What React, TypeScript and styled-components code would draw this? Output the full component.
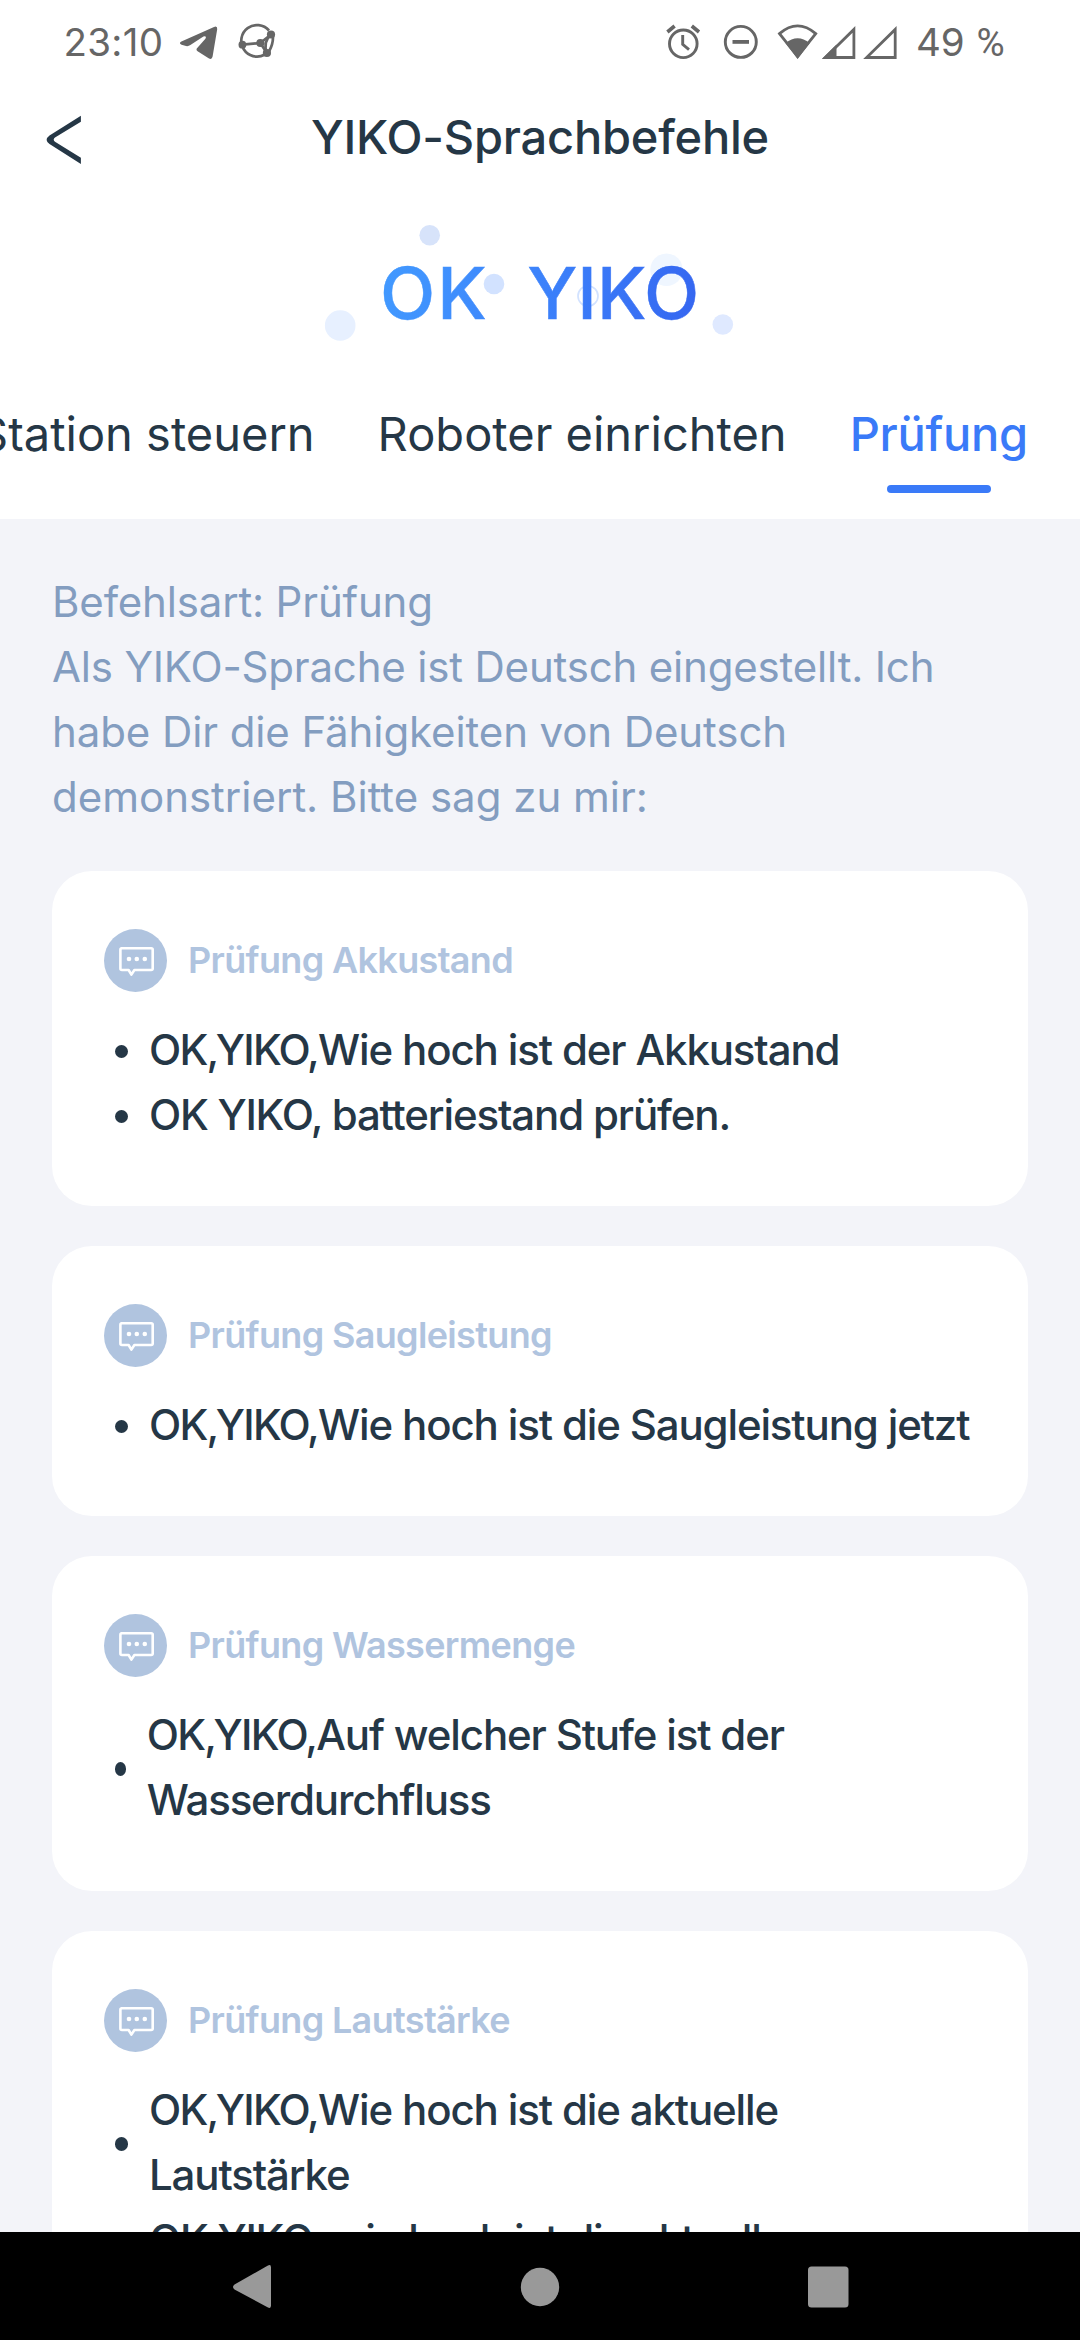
import React from "react";
import styled, { createGlobalStyle } from "styled-components";

const GlobalStyle = createGlobalStyle`
  * { box-sizing: border-box; }
  body { margin: 0; background: #ffffff; }
  ul { margin: 0; padding: 0; list-style: none; }
  h1, h2, p { margin: 0; font-weight: inherit; font-size: inherit; }
  button { border: 0; padding: 0; background: none; font: inherit; color: inherit; }
  svg { display: block; flex: none; }
`;

const Screen = styled.div`
  width: 1080px;
  height: 2340px;
  display: flex;
  flex-direction: column;
  overflow: hidden;
  background: #ffffff;
  color: #253746;
  font-family: Inter, Roboto, "Liberation Sans", sans-serif;
`;

const StatusBar = styled.div`
  flex: none;
  height: 84px;
  padding: 0 60px 0 63.5px;
  display: flex;
  justify-content: space-between;
  color: #666666;
`;

const StatusGroup = styled.div`
  display: flex;
  align-items: flex-start;
`;

const StatusText = styled.span<{ $width: number; $spacing: number }>`
  width: ${(p) => p.$width}px;
  line-height: 84px;
  font-size: 38.5px;
  letter-spacing: ${(p) => p.$spacing}px;
  white-space: nowrap;
`;

const Percent = styled.span`
  margin-left: 1px;
  font-family: Roboto, "Liberation Sans", sans-serif;
`;

const Header = styled.header`
  flex: none;
  height: 106px;
  padding: 0 40px;
  display: grid;
  grid-template-columns: 60px 1fr 60px;
  align-items: center;
`;

const Title = styled.h1`
  text-align: center;
  font-size: 47px;
  line-height: 106px;
  font-weight: 500;
  letter-spacing: -0.22px;
`;

const Hero = styled.div`
  flex: none;
  position: relative;
  height: 200px;
  padding: 60px 0 0 380px;
`;

const Bubbles = styled.svg`
  position: absolute;
  left: 0;
  top: 0;
`;

const Logo = styled.div`
  position: relative;
  width: 320px;
  display: flex;
  gap: 38.5px;
  font-size: 72px;
  line-height: 86px;
  font-weight: 500;
  color: transparent;
  background: linear-gradient(100deg, #429aff 0%, #3c83fb 48%, #3565f0 100%);
  background-clip: text;
  -webkit-background-clip: text;
  -webkit-text-stroke: 0.5px transparent;
`;

const LogoWord = styled.span<{ $spacing: number }>`
  letter-spacing: ${(p) => p.$spacing}px;
`;

const Tabs = styled.nav`
  flex: none;
  height: 129px;
  padding-right: 52px;
  display: flex;
  justify-content: flex-end;
  gap: 63px;
`;

const Tab = styled.button<{ $active?: boolean }>`
  display: flex;
  flex-direction: column;
  align-items: center;
  padding-top: 15px;
  font-size: 47px;
  line-height: 57px;
  font-weight: ${(p) => (p.$active ? 500 : 400)};
  letter-spacing: ${(p) => (p.$active ? -0.25 : 0)}px;
  color: ${(p) => (p.$active ? "#3a7af8" : "inherit")};
  white-space: nowrap;
`;

const Indicator = styled.span`
  width: 104px;
  height: 8px;
  margin-top: 23px;
  border-radius: 4px;
  background: #3a7af8;
`;

const Content = styled.main`
  flex: 1;
  min-height: 0;
  overflow: hidden;
  padding: 50px 52px 0;
  background: #f3f4f9;
`;

const Intro = styled.div`
  height: 302px;
  font-size: 42px;
  line-height: 65px;
  color: #839dc0;
  white-space: nowrap;
`;

const IntroLine = styled.p<{ $spacing: number }>`
  letter-spacing: ${(p) => p.$spacing}px;
`;

const CardList = styled.div`
  display: flex;
  flex-direction: column;
  gap: 40px;
`;

const Card = styled.section`
  padding: 58px 52px 59px;
  border-radius: 40px;
  background: #ffffff;
`;

const CardHead = styled.div`
  display: flex;
  align-items: center;
  gap: 21px;
  height: 63px;
  margin-bottom: 25px;
`;

const CardTitle = styled.h2`
  padding-bottom: 2px;
  font-size: 36px;
  line-height: 44px;
  font-weight: 600;
  letter-spacing: -0.66px;
  color: #b0c4df;
`;

const CommandItem = styled.li<{ $narrow?: boolean }>`
  display: flex;
  align-items: center;
  gap: 20.7px;
  padding-left: 11px;
  font-size: 42px;
  line-height: 65px;
  font-weight: 500;
  letter-spacing: -1.14px;
  white-space: nowrap;
  &::before {
    content: "";
    flex: none;
    width: ${(p) => (p.$narrow ? 11 : 13.3)}px;
    height: 13.3px;
    margin-top: 4px;
    border-radius: 50%;
    background: #253746;
  }
`;

const WakeWord = styled.span<{ $spacing: number }>`
  letter-spacing: ${(p) => p.$spacing}px;
`;

const NavBar = styled.footer`
  flex: none;
  height: 108px;
  display: grid;
  grid-template-columns: 252px 288px 288px 252px;
  background: #000000;
`;

const NavSlot = styled.div`
  display: flex;
  justify-content: flex-end;
`;

const ChatIcon = () => (
  <svg width="63" height="63" viewBox="0 0 63 63">
    <circle cx="31.5" cy="31.5" r="31.5" fill="#b0c4df" />
    <path
      d="M17.4 19.3H47.2q1.5 0 1.5 1.5v18.7q0 1.5-1.5 1.5H30.4L27.4 45.6L24.6 41H18q-1.6 0-1.6-1.5v-18.7q0-1.5 1.6-1.5Z"
      fill="none"
      stroke="#ffffff"
      strokeWidth="2.6"
      strokeLinejoin="round"
    />
    <g fill="#ffffff">
      <circle cx="25" cy="30" r="2.3" />
      <circle cx="32.8" cy="30" r="2.3" />
      <circle cx="40.8" cy="30" r="2.3" />
    </g>
  </svg>
);

const introLines = [
  { text: "Befehlsart: Prüfung", spacing: -0.17 },
  { text: "Als YIKO-Sprache ist Deutsch eingestellt. Ich", spacing: -0.18 },
  { text: "habe Dir die Fähigkeiten von Deutsch", spacing: -0.1 },
  { text: "demonstriert. Bitte sag zu mir:", spacing: -0.01 },
];

type Command = { wake: string; spacing: number; lines: string[] };

const cards: { title: string; narrow?: boolean; commands: Command[] }[] = [
  {
    title: "Prüfung Akkustand",
    commands: [
      { wake: "OK,YIKO,", spacing: -1.75, lines: ["Wie hoch ist der Akkustand"] },
      { wake: "OK YIKO, ", spacing: -1.28, lines: ["batteriestand prüfen."] },
    ],
  },
  {
    title: "Prüfung Saugleistung",
    commands: [{ wake: "OK,YIKO,", spacing: -1.75, lines: ["Wie hoch ist die Saugleistung jetzt"] }],
  },
  {
    title: "Prüfung Wassermenge",
    narrow: true,
    commands: [
      { wake: "OK,YIKO,", spacing: -1.7, lines: ["Auf welcher Stufe ist der", "Wasserdurchfluss"] },
    ],
  },
  {
    title: "Prüfung Lautstärke",
    commands: [
      { wake: "OK,YIKO,", spacing: -1.75, lines: ["Wie hoch ist die aktuelle", "Lautstärke"] },
      { wake: "OK YIKO, ", spacing: -1.28, lines: ["wie hoch ist die aktuelle", "Lautstärke"] },
    ],
  },
];

const CommandText = ({ command }: { command: Command }) => (
  <span>
    <WakeWord $spacing={command.spacing}>{command.wake}</WakeWord>
    {command.lines.map((line, i) => (
      <React.Fragment key={line}>
        {i > 0 && <br />}
        {line}
      </React.Fragment>
    ))}
  </span>
);

export default function App() {
  return (
    <Screen>
      <GlobalStyle />
      <StatusBar>
        <StatusGroup>
          <StatusText $width={114.5} $spacing={0.3}>23:10</StatusText>
          <svg width="100" height="84" viewBox="178 0 100 84">
            <path
              d="M181.4 41.4L214 26.9Q217.6 25.6 217.2 29.2L212.6 56.6Q211.8 60.2 208.6 58.2L197.6 51.2Q195.6 49.8 197.2 48L205.4 38.8Q207 35.4 203.4 36.4L190.4 45Q188.4 46.5 186 46L181.6 44.8Q178.4 43 181.4 41.4Z"
              fill="#666666"
            />
            <g fill="none" stroke="#666666" strokeWidth="2.7">
              <path d="M269 30.5A15.8 15.8 0 1 0 264.5 54.8" />
              <path d="M242.4 44.7L260.3 43L271 34.5M272.8 35Q273.8 43 269 51.5" />
              <path d="M260.3 43L266.9 53" />
              <path d="M271 34.5Q262.6 42 266.9 53" />
            </g>
            <g fill="#666666">
              <circle cx="242.4" cy="44.7" r="3.9" />
              <circle cx="271" cy="34.5" r="4.1" />
              <circle cx="260.3" cy="43" r="4" />
              <circle cx="266.9" cy="53" r="4.1" />
            </g>
          </svg>
        </StatusGroup>
        <StatusGroup>
          <svg width="250" height="84" viewBox="666 0 250 84">
            <g fill="none" stroke="#666666" strokeWidth="2.9">
              <circle cx="683.3" cy="43.8" r="13.8" />
              <path d="M682.7 35V44.3L689 49.6" />
              <path d="M667.4 32L674.6 26M699 32L691.8 26" strokeWidth="3.6" />
              <circle cx="740.8" cy="41.9" r="15.5" />
              <path d="M732.5 41.9H749" strokeWidth="3.8" />
              <path d="M797.6 56.5L779.5 33.6Q797.6 18.2 815.7 33.6Z" strokeWidth="2.8" />
              <path d="M853.9 29.4V57.5H825.3Z" strokeWidth="2.8" />
              <path d="M895.2 29.4V57.5H866.6Z" strokeWidth="2.8" />
            </g>
            <path d="M797.6 59L785.5 43Q797.6 33.5 809.7 43Z" fill="#666666" />
            <path d="M822 58.8L836.5 44.5V58.8Z" fill="#666666" />
          </svg>
          <StatusText $width={104} $spacing={0}>
            49 <Percent>%</Percent>
          </StatusText>
        </StatusGroup>
      </StatusBar>

      <Header>
        <svg width="60" height="106" viewBox="40 84 60 106">
          <path
            d="M80.9 115.7V121.8L55 137.6Q52.4 139.7 55 141.8L80.9 157.8V164L49.5 144Q43.8 139.7 49.5 135.4Z"
            fill="#253746"
          />
        </svg>
        <Title>YIKO-Sprachbefehle</Title>
      </Header>

      <Hero>
        <Bubbles width="1080" height="200" viewBox="0 190 1080 200">
          <circle cx="429.7" cy="235.3" r="10.3" fill="#d7e3fa" />
          <circle cx="494" cy="284" r="10.3" fill="#d2e2ff" />
          <circle cx="340.2" cy="325.5" r="15.3" fill="#e7f0ff" />
          <circle cx="666.5" cy="269.7" r="16.2" fill="#eff6ff" />
          <circle cx="722.8" cy="324.5" r="10.3" fill="#dfe9ff" />
          <circle cx="588" cy="296" r="10" fill="none" stroke="#d2e2ff" strokeWidth="1.7" />
        </Bubbles>
        <Logo>
          <LogoWord $spacing={2}>OK</LogoWord>
          <LogoWord $spacing={0}>YIKO</LogoWord>
        </Logo>
      </Hero>

      <Tabs>
        <Tab>Station steuern</Tab>
        <Tab>Roboter einrichten</Tab>
        <Tab $active>
          Prüfung
          <Indicator />
        </Tab>
      </Tabs>

      <Content>
        <Intro>
          {introLines.map((line) => (
            <IntroLine key={line.text} $spacing={line.spacing}>
              {line.text}
            </IntroLine>
          ))}
        </Intro>
        <CardList>
          {cards.map((card) => (
            <Card key={card.title}>
              <CardHead>
                <ChatIcon />
                <CardTitle>{card.title}</CardTitle>
              </CardHead>
              <ul>
                {card.commands.map((command) => (
                  <CommandItem key={command.wake} $narrow={card.narrow}>
                    <CommandText command={command} />
                  </CommandItem>
                ))}
              </ul>
            </Card>
          ))}
        </CardList>
      </Content>

      <NavBar>
        <NavSlot>
          <svg width="60" height="108" viewBox="192 2232 60 108" overflow="visible">
            <path
              d="M267.5 2265.8Q271 2263.6 271 2267.5V2305.5Q271 2309.4 267.5 2307.2L234.5 2289.4Q231.5 2287 234.5 2284.6Z"
              fill="#999999"
            />
          </svg>
        </NavSlot>
        <NavSlot>
          <svg width="60" height="108" viewBox="480 2232 60 108" overflow="visible">
            <circle cx="540" cy="2287" r="19.2" fill="#999999" />
          </svg>
        </NavSlot>
        <NavSlot>
          <svg width="60" height="108" viewBox="768 2232 60 108" overflow="visible">
            <rect x="808" y="2266.5" width="40.5" height="41" rx="3.5" fill="#999999" />
          </svg>
        </NavSlot>
      </NavBar>
    </Screen>
  );
}
